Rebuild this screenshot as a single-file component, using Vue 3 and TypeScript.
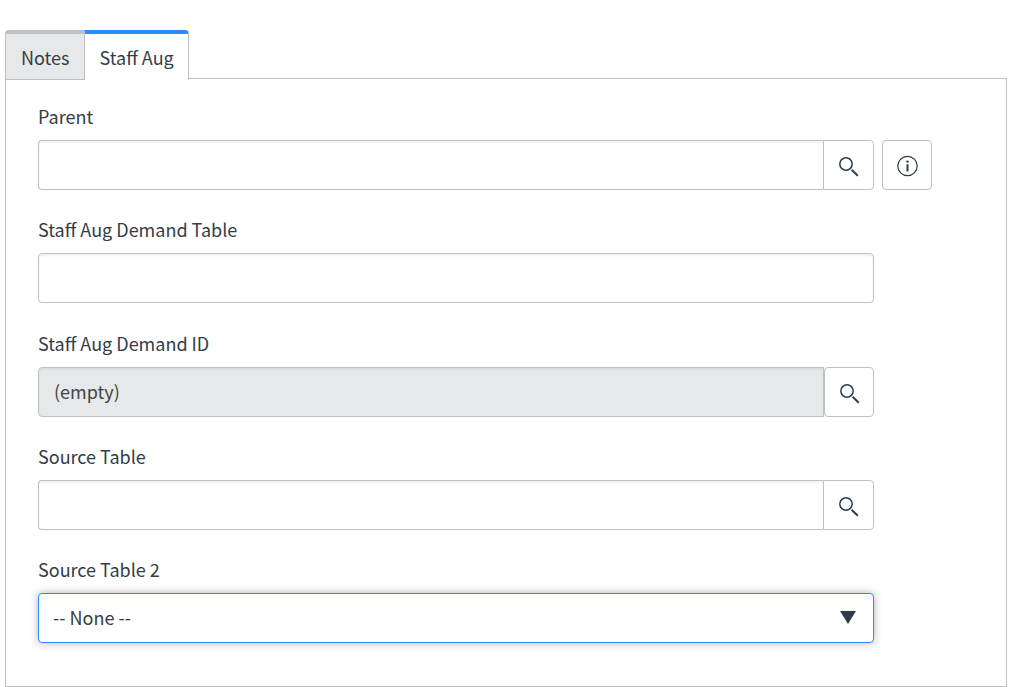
<script setup lang="ts">
import { ref } from 'vue'

type FieldKind = 'reference' | 'text' | 'document' | 'choice'

interface Field {
  id: string
  label: string
  kind: FieldKind
  value: string
  info?: boolean
}

const tabs = ['Notes', 'Staff Aug']
const activeTab = ref('Staff Aug')

const fields = ref<Field[]>([
  { id: 'parent', label: 'Parent', kind: 'reference', value: '', info: true },
  { id: 'demand-table', label: 'Staff Aug Demand Table', kind: 'text', value: '' },
  { id: 'demand-id', label: 'Staff Aug Demand ID', kind: 'document', value: '(empty)' },
  { id: 'source-table', label: 'Source Table', kind: 'reference', value: '' },
  { id: 'source-table-2', label: 'Source Table 2', kind: 'choice', value: '-- None --' },
])
</script>

<template>
  <main class="page">
    <div class="tabs" role="tablist">
      <button
        v-for="tab in tabs"
        :key="tab"
        type="button"
        role="tab"
        class="tab"
        :class="{ active: tab === activeTab }"
        :aria-selected="tab === activeTab"
        @click="activeTab = tab"
      >{{ tab }}</button>
    </div>
    <form class="panel" @submit.prevent>
      <div v-for="field in fields" :key="field.id" class="field">
        <label class="label" :for="field.id">{{ field.label }}</label>
        <div class="row">
          <div v-if="field.kind === 'choice'" class="choice">
            <select :id="field.id" v-model="field.value" class="control select">
              <option>-- None --</option>
            </select>
            <svg class="arrow" width="16" height="13" viewBox="0 0 16 13" aria-hidden="true">
              <path d="M0 0H16L8 13Z" fill="#2e3d49" />
            </svg>
          </div>
          <div v-else class="group" :class="field.kind">
            <input
              :id="field.id"
              v-model="field.value"
              type="text"
              class="control input"
              :readonly="field.kind === 'document'"
            />
            <button
              v-if="field.kind !== 'text'"
              type="button"
              class="icon-button lookup"
              :aria-label="'Look up ' + field.label"
            >
              <svg width="20" height="20" viewBox="0 0 20 20" fill="none" stroke="#2e3d49" aria-hidden="true">
                <circle cx="7" cy="7" r="6.2" stroke-width="1.5" />
                <path d="M12.6 12.8L18.8 18.8" stroke-width="2" />
              </svg>
            </button>
          </div>
          <button
            v-if="field.info"
            type="button"
            class="icon-button"
            :aria-label="'Preview ' + field.label"
          >
            <svg width="22" height="22" viewBox="0 0 22 22" fill="none" aria-hidden="true">
              <circle cx="11.5" cy="11" r="9.7" stroke="#2e3d49" stroke-width="1.2" />
              <path d="M11.5 9.2V16.5" stroke="#2e3d49" stroke-width="2" />
              <circle cx="11.5" cy="6.6" r="1.2" fill="#2e3d49" />
            </svg>
          </button>
        </div>
      </div>
    </form>
  </main>
</template>

<style>
body {
  margin: 0;
  background: #fff;
}
</style>

<style scoped>
.page {
  box-sizing: border-box;
  display: flex;
  flex-direction: column;
  min-height: 100vh;
  padding: 30px 19px 0 5px;
  color: #343d47;
  font-family: "Noto Sans CJK SC", "Noto Sans", sans-serif;
  font-size: 18px;
  line-height: 28px;
}

.tabs {
  display: flex;
  z-index: 1;
  margin-bottom: -2px;
}

.tab {
  box-sizing: border-box;
  height: 50px;
  padding: 0 14px 0 15px;
  border: 1px solid #bdc0c4;
  border-top: 4px solid #bdc0c4;
  border-right: 0;
  border-radius: 4px 0 0 0;
  background: #e6e8ea;
  color: inherit;
  font: inherit;
  cursor: pointer;
}

.tab:last-child {
  border-right: 1px solid #bdc0c4;
  border-radius: 0 4px 0 0;
}

.tab.active {
  border-top-color: #278efc;
  border-bottom: 0;
  background: #fff;
}

.panel {
  box-sizing: border-box;
  display: flex;
  flex: 1;
  flex-direction: column;
  justify-content: space-between;
  padding: 23px 74px 43px 32px;
  border: 1px solid #bdc0c4;
}

.label {
  display: block;
  width: fit-content;
  margin-bottom: 10px;
}

.row {
  display: grid;
  grid-template-columns: 1fr 50px;
  gap: 8px;
}

.group {
  display: flex;
}

.control {
  box-sizing: border-box;
  width: 100%;
  min-width: 0;
  height: 50px;
  margin: 0;
  border: 1px solid #bdc0c4;
  border-radius: 4px;
  outline: 0;
  background: #fff;
  color: inherit;
  font: inherit;
}

.input {
  padding: 0 15px 2px;
  box-shadow: inset 0 2px 2px rgba(0, 0, 0, 0.05);
}

.reference .input {
  border-right: 0;
  border-radius: 4px 0 0 4px;
}

.document .input {
  border-radius: 4px 0 0 4px;
  background: #e6e8ea;
  color: #444;
}

.icon-button {
  box-sizing: border-box;
  display: flex;
  flex: none;
  align-items: center;
  justify-content: center;
  width: 50px;
  height: 50px;
  padding: 2px 0 0;
  border: 1px solid #bdc0c4;
  border-radius: 4px;
  background: #fff;
  cursor: pointer;
}

.lookup {
  padding: 4px 0 0 2px;
}

.reference .lookup {
  width: 51px;
  padding-left: 0;
  border-radius: 0 4px 4px 0;
}

.choice {
  position: relative;
}

.select {
  padding: 0 48px 2px 14px;
  border-color: #278efc;
  box-shadow: 0 0 8px rgba(0, 0, 0, 0.3);
  appearance: none;
}

.arrow {
  position: absolute;
  top: 18px;
  right: 18px;
  pointer-events: none;
}
</style>
